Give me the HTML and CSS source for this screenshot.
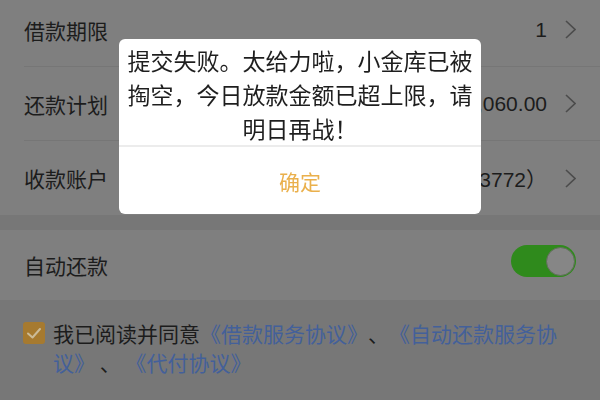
FILE: index.html
```html
<!DOCTYPE html>
<html lang="zh-CN">
<head>
<meta charset="utf-8">
<title>借款</title>
<link rel="stylesheet" href="styles.css">
</head>
<body>
<div class="page">
  <div class="group first">
    <div class="row">
      <span class="label">借款期限</span>
      <span class="value">1<svg class="chev" viewBox="0 0 11 19" width="11" height="19"><polyline points="1,1 10,9.5 1,18"/></svg></span>
    </div>
    <div class="row">
      <span class="label">还款计划</span>
      <span class="value">¥1,060.00<svg class="chev" viewBox="0 0 11 19" width="11" height="19"><polyline points="1,1 10,9.5 1,18"/></svg></span>
    </div>
    <div class="row last">
      <span class="label">收款账户</span>
      <span class="value">招商银行（3772）<svg class="chev" viewBox="0 0 11 19" width="11" height="19"><polyline points="1,1 10,9.5 1,18"/></svg></span>
    </div>
  </div>
  <div class="group second">
    <div class="row last short">
      <span class="label">自动还款</span>
      <span class="switch"><span class="knob"></span></span>
    </div>
  </div>
  <div class="agree">
    <span class="check"><svg viewBox="0 0 22 22" width="22" height="22"><polyline points="5,11.5 9.5,15.5 17,7"/></svg></span>
    <p class="agree-text">我已阅读并同意<a class="link">《借款服务协议》</a>、<a class="link">《自动还款服务协议》</a> 、 <a class="link">《代付协议》</a></p>
  </div>
</div>
<div class="overlay">
  <div class="dialog">
    <div class="msg">提交失败。太给力啦，小金库已被掏空，今日放款金额已超上限，请明日再战！</div>
    <div class="btn">确定</div>
  </div>
</div>
</body>
</html>
```
FILE: styles.css
```css
html, body {
  margin: 0;
  padding: 0;
}
body {
  width: 600px;
  height: 400px;
  overflow: hidden;
  background: #777777;
  font-family: "Liberation Sans", "Noto Sans CJK SC", sans-serif;
  color: #1c1c1c;
  text-spacing-trim: space-all;
}
.page {
  display: flex;
  flex-direction: column;
}
.group {
  background: #7f7f7f;
}
.group.first {
  margin-top: -7px;
}
.group.second {
  margin-top: 15px;
}
.row {
  display: flex;
  align-items: center;
  justify-content: space-between;
  height: 73px;
  margin-left: 24px;
  padding-right: 24px;
  border-bottom: 1px solid #767676;
}
.row.last {
  height: 74px;
  border-bottom: none;
}
.row.short {
  height: 70px;
}
.label {
  font-size: 21px;
  font-family: "Noto Sans CJK SC", sans-serif;
}
.value {
  display: flex;
  align-items: center;
  gap: 18px;
  font-size: 21px;
}
.chev {
  fill: none;
  stroke: #4c4c4c;
  stroke-width: 1.6;
}
.switch {
  width: 65px;
  height: 32px;
  border-radius: 16px;
  background: #2f8a1c;
  margin-bottom: 8px;
  display: flex;
  justify-content: flex-end;
  align-items: center;
  padding-right: 1px;
  box-sizing: border-box;
}
.knob {
  width: 29px;
  height: 29px;
  border-radius: 50%;
  background: #868686;
  border: 1px solid #5f6f58;
  box-sizing: border-box;
}
.agree {
  display: flex;
  align-items: flex-start;
  gap: 8px;
  padding: 19px 35px 0 23px;
}
.check {
  flex: none;
  width: 22px;
  height: 22px;
  margin-top: 3px;
  border-radius: 3px;
  background: #a67a30;
}
.check svg {
  display: block;
  fill: none;
  stroke: #cbbb98;
  stroke-width: 2;
  stroke-linecap: round;
  stroke-linejoin: round;
}
.agree-text {
  margin: 0;
  font-size: 21px;
  line-height: 29px;
  font-family: "Noto Sans CJK SC", sans-serif;
  color: #1c1c1c;
}
.link {
  color: #43609a;
}
.overlay {
  position: fixed;
  inset: 0;
  display: flex;
  justify-content: center;
  align-items: flex-start;
  padding-top: 39px;
}
.dialog {
  width: 362px;
  background: #fff;
  border-radius: 6px;
  overflow: hidden;
}
.msg {
  padding: 4px 8px 0;
  font-family: "Noto Sans CJK SC", sans-serif;
  font-size: 23px;
  line-height: 34px;
  text-align: center;
  color: #1e1e1e;
  border-bottom: 2px solid #ececec;
}
.btn {
  height: 67px;
  display: flex;
  align-items: center;
  justify-content: center;
  font-family: "Noto Sans CJK SC", sans-serif;
  font-size: 21px;
  color: #eab04c;
}
```
